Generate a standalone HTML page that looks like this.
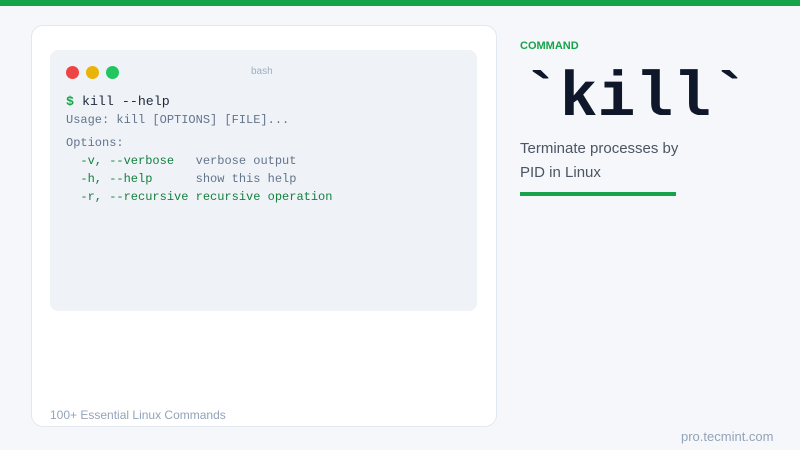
<!DOCTYPE html>
<html><head><style>
*{margin:0;padding:0;box-sizing:border-box}
body{width:800px;height:450px;background:#f5f7fa;position:relative;overflow:hidden;font-family:"Liberation Sans",sans-serif}
.bar{position:absolute;left:0;top:0;width:800px;height:6px;background:#16a34a}
.card{position:absolute;left:31px;top:25px;width:466px;height:402px;background:#fff;border:1px solid #e2e8f0;border-radius:12px}
.term{position:absolute;left:50px;top:50px;width:427px;height:261px;background:#eff3f8;border-radius:8px}
.dot{position:absolute;top:66px;width:13px;height:13px;border-radius:50%}
.m{position:absolute;font-family:"Liberation Mono",monospace;white-space:pre;font-size:12px;color:#64748b}
.g{color:#15803d}
.t{position:absolute;white-space:nowrap}
</style></head><body>
<div class="bar"></div>
<div class="card"></div>
<div class="term"></div>
<div class="dot" style="left:66px;background:#ef4444"></div>
<div class="dot" style="left:86px;background:#eab308"></div>
<div class="dot" style="left:106px;background:#22c55e"></div>
<div class="t" style="left:251px;top:66px;font-size:10px;color:#a0aec0">bash</div>
<div class="m" style="left:66px;top:94px;font-size:13.3px;color:#1e293b"><span style="color:#16a34a;font-weight:bold">$</span> kill --help</div>
<div class="m" style="left:66px;top:113px">Usage: kill [OPTIONS] [FILE]...</div>
<div class="m" style="left:66px;top:136px">Options:</div>
<div class="m" style="left:66px;top:154px"><span class="g">  -v, --verbose</span>   verbose output</div>
<div class="m" style="left:66px;top:172px"><span class="g">  -h, --help</span>      show this help</div>
<div class="m" style="left:66px;top:190px"><span class="g">  -r, --recursive</span> <span class="g">recursive operation</span></div>
<div class="t" style="left:50px;top:408px;font-size:12px;color:#94a3b8">100+ Essential Linux Commands</div>
<div class="t" style="left:520px;top:40px;font-size:11px;font-weight:bold;color:#16a34a">COMMAND</div>
<div class="t" style="left:522px;top:67px;font-size:63px;line-height:63px;font-weight:bold;font-family:'Liberation Mono',monospace;color:#0f172a">`kill`</div>
<div class="t" style="left:520px;top:137px;font-size:15px;line-height:24px;color:#4b5563">Terminate processes by<br>PID in Linux</div>
<div style="position:absolute;left:520px;top:192px;width:156px;height:4px;background:#16a34a"></div>
<div class="t" style="left:681px;top:429px;font-size:13px;color:#94a3b8">pro.tecmint.com</div>
</body></html>
